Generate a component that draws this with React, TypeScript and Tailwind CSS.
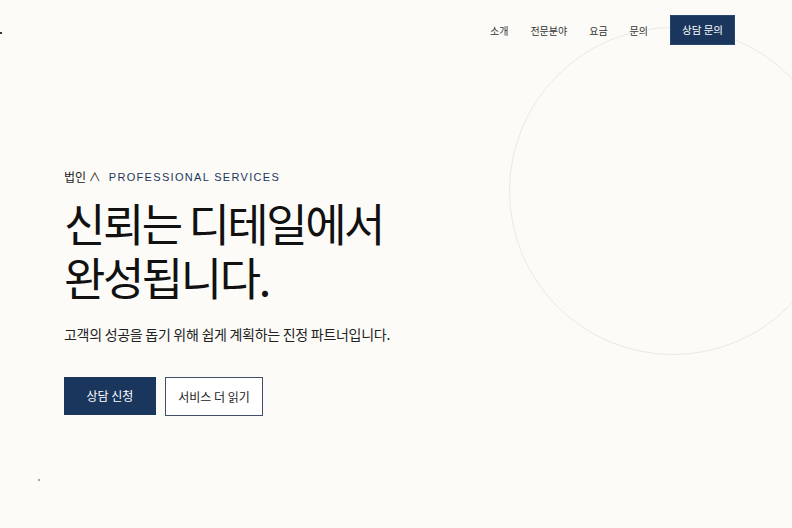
import React from "react";

const NAVY = "bg-[#1b365d]";

export default function App() {
  const font = { fontFamily: '"Noto Sans CJK KR", "Noto Sans", sans-serif' };
  return (
    <div
      className="relative w-[792px] h-[528px] overflow-hidden bg-[#fcfbf7] text-[#111]"
      style={font}
    >
      {/* decorative circle */}
      <div className="absolute left-[509px] top-[27px] w-[328px] h-[328px] rounded-full border border-[#ece9e1]" />

      {/* Header */}
      <header className="relative flex items-center justify-end h-[60px] pr-[57px]">
        <span className="absolute left-0 top-[32px] w-[2px] h-[2px] bg-[#333]" />
        <nav className="flex items-center gap-[22px] text-[10px] text-[#333]">
          <a>소개</a>
          <a>전문분야</a>
          <a>요금</a>
          <a>문의</a>
        </nav>
        <button
          className={`ml-[22px] h-[30px] w-[65px] ${NAVY} text-white text-[10.5px] border border-[#2a4670]`}
        >
          상담 문의
        </button>
      </header>

      {/* Hero */}
      <main className="relative px-[64px] pt-[108px]">
        <div className="flex items-center gap-[8px] text-[11px]">
          <span className="text-[#222] text-[12px]">법인 ∧</span>
          <span className="tracking-[0.12em] text-[#1b365d] font-medium" style={{ fontFamily: '"Liberation Sans", sans-serif' }}>
            PROFESSIONAL SERVICES
          </span>
        </div>

        <h1 className="mt-[10px] text-[45px] leading-[54px] tracking-[-0.055em] font-normal text-[#111]">
          <span className="block">신뢰는 디테일에서</span>
          <span className="block">완성됩니다.</span>
        </h1>

        <p className="mt-[20px] text-[14px] text-[#222] tracking-[-0.02em]">
          고객의 성공을 돕기 위해 쉽게 계획하는 진정 파트너입니다.
        </p>

        <div className="mt-[32px] flex gap-[9px]">
          <button className={`w-[92px] h-[38px] ${NAVY} text-white text-[12px]`}>
            상담 신청
          </button>
          <button className="w-[98px] h-[39px] bg-white border border-[#40506a] text-[12px] text-[#222]">
            서비스 더 읽기
          </button>
        </div>
      </main>

      <span className="absolute left-[38px] top-[479px] w-[2px] h-[2px] rounded-full bg-[#888]" />
    </div>
  );
}
